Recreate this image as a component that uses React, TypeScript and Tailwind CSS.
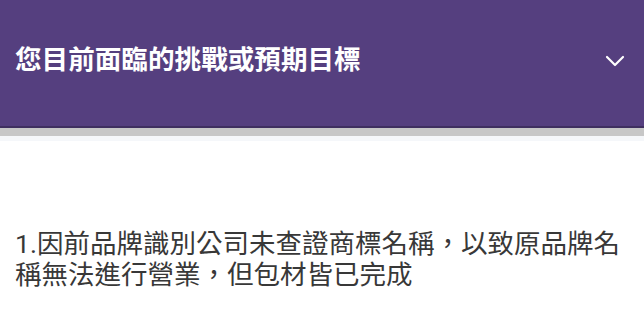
import React from 'react';

const App: React.FC = () => {
  return (
    <div className="w-[644px] h-[314px] overflow-hidden bg-white font-['Roboto','Noto_Sans_CJK_TC',sans-serif]">
      <div className="flex h-[128px] items-center justify-between bg-[#553f7f] pl-[15px] pr-[19px] border-b-2 border-[#3f2f60]">
        <h2 className="text-[26.6px] font-bold leading-none text-white pb-[5px]">您目前面臨的挑戰或預期目標</h2>
        <svg width="20" height="12" viewBox="0 0 20 12" fill="none" className="mb-[4px]">
          <path d="M2 2l8 8 8-8" stroke="white" strokeWidth="2.2" strokeLinecap="round" strokeLinejoin="round" />
        </svg>
      </div>
      <div className="h-[8px] bg-[#c7c7c7]" />
      <div className="h-[5px] bg-[#f5f7fa]" />
      <div className="px-[15px] pt-[87px]">
        <p className="text-[26.5px] leading-[31px] text-[#383838]">
          1.因前品牌識別公司未查證商標名稱，以致原品牌名稱無法進行營業，但包材皆已完成
        </p>
      </div>
    </div>
  );
};

export default App;
